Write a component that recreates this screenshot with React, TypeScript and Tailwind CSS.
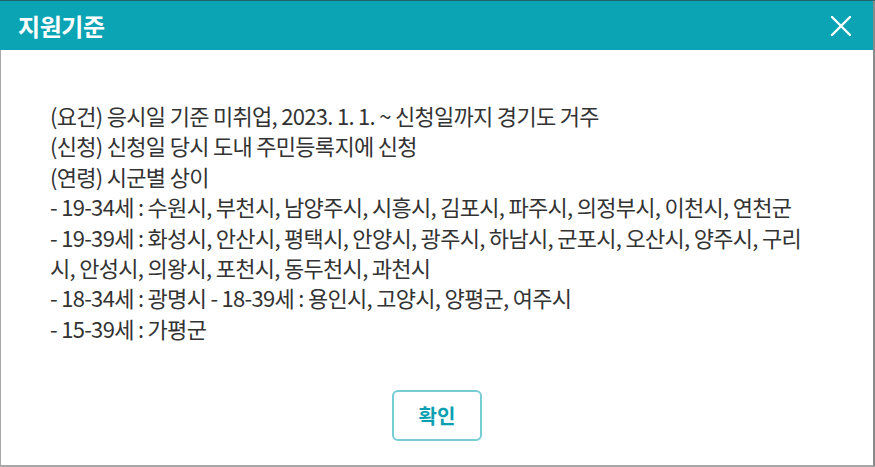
import React from "react";

const lines: string[] = [
  "(요건) 응시일 기준 미취업, 2023. 1. 1. ~ 신청일까지 경기도 거주",
  "(신청) 신청일 당시 도내 주민등록지에 신청",
  "(연령) 시군별 상이",
  "- 19-34세 : 수원시, 부천시, 남양주시, 시흥시, 김포시, 파주시, 의정부시, 이천시, 연천군",
  "- 19-39세 : 화성시, 안산시, 평택시, 안양시, 광주시, 하남시, 군포시, 오산시, 양주시, 구리",
  "시, 안성시, 의왕시, 포천시, 동두천시, 과천시",
  "- 18-34세 : 광명시 - 18-39세 : 용인시, 고양시, 양평군, 여주시",
  "- 15-39세 : 가평군",
];

export default function App() {
  return (
    <div
      className="w-[875px] h-[467px] bg-white flex flex-col overflow-hidden"
      style={{ fontFamily: '"Noto Sans CJK KR", "Noto Sans", sans-serif' }}
    >
      <div className="h-px bg-[#23646b]" />
      <header className="h-[49px] bg-[#0ba4b4] flex items-center justify-between pl-[18px] pr-[22px] border-r-2 border-[#8a8a8a]">
        <h1 className="text-white text-[24px] font-bold tracking-[-0.4px]">지원기준</h1>
        <svg width="20" height="20" viewBox="0 0 20 20">
          <path d="M1 1 L19 19 M19 1 L1 19" stroke="white" strokeWidth="2.4" strokeLinecap="round" />
        </svg>
      </header>
      <main className="flex-1 flex flex-col border-l border-r-2 border-b-2 border-[#a8a8a8] border-r-[#8a8a8a]">
        <div className="pl-[49px] pt-[50px] text-[22px] leading-[30.4px] text-[#333333] tracking-[-0.7px]">
          {lines.map((l, i) => (
            <p key={i} className="whitespace-nowrap">{l}</p>
          ))}
        </div>
        <div className="flex justify-center mt-[47px]">
          <button className="w-[90px] h-[51px] rounded-[6px] border-2 border-[#76cdd6] text-[#0a9fb1] text-[20px] font-bold">
            확인
          </button>
        </div>
      </main>
    </div>
  );
}
